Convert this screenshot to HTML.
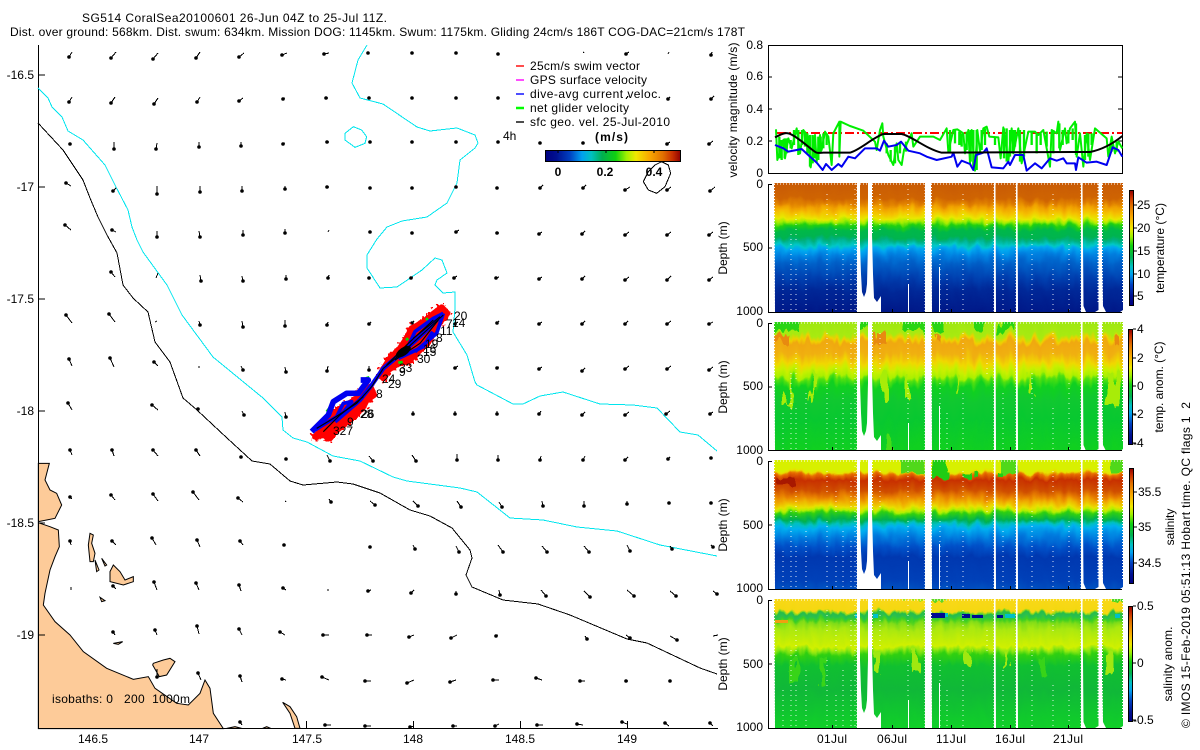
<!DOCTYPE html>
<html><head><meta charset="utf-8"><title>SG514 CoralSea20100601</title>
<style>
html,body{margin:0;padding:0;background:#fff}
svg{display:block}
text{font-family:"Liberation Sans",sans-serif;font-size:12px;fill:#000}
</style></head><body>
<svg xmlns="http://www.w3.org/2000/svg" width="1200" height="750" viewBox="0 0 1200 750">
<defs>
<linearGradient id="g1" gradientUnits="userSpaceOnUse" x1="0" y1="0" x2="0" y2="128">
<stop offset="0" stop-color="#c95c05"/><stop offset=".115" stop-color="#cf6402"/><stop offset=".154" stop-color="#e08000"/><stop offset=".18" stop-color="#f0a000"/><stop offset=".22" stop-color="#f5c000"/><stop offset=".27" stop-color="#e8e800"/><stop offset=".297" stop-color="#a0ee00"/><stop offset=".323" stop-color="#20d010"/><stop offset=".362" stop-color="#00b848"/><stop offset=".414" stop-color="#00b450"/><stop offset=".44" stop-color="#00b080"/><stop offset=".48" stop-color="#00c8c8"/><stop offset=".505" stop-color="#00a8f0"/><stop offset=".557" stop-color="#0080e0"/><stop offset=".622" stop-color="#0060c8"/><stop offset=".727" stop-color="#0040b0"/><stop offset=".83" stop-color="#002898"/><stop offset="1" stop-color="#001888"/>
</linearGradient>
<linearGradient id="g2" gradientUnits="userSpaceOnUse" x1="0" y1="0" x2="0" y2="128">
<stop offset="0" stop-color="#a0e810"/><stop offset=".09" stop-color="#a8ea10"/><stop offset=".13" stop-color="#f0d000"/><stop offset=".16" stop-color="#f0a810"/><stop offset=".24" stop-color="#f0b010"/><stop offset=".315" stop-color="#f0d800"/><stop offset=".37" stop-color="#c8f000"/><stop offset=".42" stop-color="#a8f000"/><stop offset=".447" stop-color="#50e010"/><stop offset=".5" stop-color="#10d020"/><stop offset=".6" stop-color="#10c830"/><stop offset=".75" stop-color="#08c830"/><stop offset="1" stop-color="#10d020"/>
</linearGradient>
<linearGradient id="g3" gradientUnits="userSpaceOnUse" x1="0" y1="0" x2="0" y2="128">
<stop offset="0" stop-color="#d8f000"/><stop offset=".07" stop-color="#d8f000"/><stop offset=".09" stop-color="#e8e000"/><stop offset=".11" stop-color="#e87000"/><stop offset=".15" stop-color="#c83000"/><stop offset=".227" stop-color="#d05000"/><stop offset=".28" stop-color="#e88000"/><stop offset=".32" stop-color="#f0b000"/><stop offset=".36" stop-color="#e8e000"/><stop offset=".385" stop-color="#b0f000"/><stop offset=".41" stop-color="#30d010"/><stop offset=".46" stop-color="#00b050"/><stop offset=".49" stop-color="#00c0c0"/><stop offset=".52" stop-color="#00b0f0"/><stop offset=".59" stop-color="#0080e0"/><stop offset=".67" stop-color="#0050c8"/><stop offset=".75" stop-color="#0038b0"/><stop offset=".93" stop-color="#0040b8"/><stop offset="1" stop-color="#0050c0"/>
</linearGradient>
<linearGradient id="g4" gradientUnits="userSpaceOnUse" x1="0" y1="0" x2="0" y2="128">
<stop offset="0" stop-color="#f8d818"/><stop offset=".085" stop-color="#f4d810"/><stop offset=".1" stop-color="#80d820"/><stop offset=".11" stop-color="#28bc48"/><stop offset=".13" stop-color="#28c050"/><stop offset=".155" stop-color="#40d020"/><stop offset=".18" stop-color="#80dc18"/><stop offset=".23" stop-color="#a8e810"/><stop offset=".36" stop-color="#d0f000"/><stop offset=".39" stop-color="#90e810"/><stop offset=".43" stop-color="#30d010"/><stop offset=".51" stop-color="#10c030"/><stop offset=".7" stop-color="#10b838"/><stop offset="1" stop-color="#10d028"/>
</linearGradient>
<linearGradient id="cb" x1="0" y1="1" x2="0" y2="0">
<stop offset="0" stop-color="#000080"/><stop offset=".08" stop-color="#001090"/><stop offset=".18" stop-color="#0040c0"/><stop offset=".27" stop-color="#00a0f0"/><stop offset=".34" stop-color="#00c0c0"/><stop offset=".42" stop-color="#00b050"/><stop offset=".52" stop-color="#10d010"/><stop offset=".6" stop-color="#a0f000"/><stop offset=".67" stop-color="#f0e800"/><stop offset=".77" stop-color="#f8a800"/><stop offset=".87" stop-color="#e07000"/><stop offset=".94" stop-color="#c83000"/><stop offset="1" stop-color="#900000"/>
</linearGradient>
<linearGradient id="cbh" x1="0" y1="0" x2="1" y2="0">
<stop offset="0" stop-color="#000080"/><stop offset=".08" stop-color="#001090"/><stop offset=".18" stop-color="#0040c0"/><stop offset=".27" stop-color="#00a0f0"/><stop offset=".34" stop-color="#00c0c0"/><stop offset=".42" stop-color="#00b050"/><stop offset=".52" stop-color="#10d010"/><stop offset=".6" stop-color="#a0f000"/><stop offset=".67" stop-color="#f0e800"/><stop offset=".77" stop-color="#f8a800"/><stop offset=".87" stop-color="#e07000"/><stop offset=".94" stop-color="#c83000"/><stop offset="1" stop-color="#900000"/>
</linearGradient>
<filter id="f1" x="-5%" y="-10%" width="110%" height="120%" color-interpolation-filters="sRGB">
<feTurbulence type="fractalNoise" baseFrequency="0.12 0.05" numOctaves="2" seed="3" result="n"/>
<feDisplacementMap in="SourceGraphic" in2="n" scale="10" xChannelSelector="R" yChannelSelector="G"/>
</filter>
<filter id="f2" x="-5%" y="-10%" width="110%" height="120%" color-interpolation-filters="sRGB">
<feTurbulence type="fractalNoise" baseFrequency="0.14 0.03" numOctaves="2" seed="8" result="n"/>
<feDisplacementMap in="SourceGraphic" in2="n" scale="20" xChannelSelector="R" yChannelSelector="G"/>
</filter>
<filter id="f3" x="-5%" y="-10%" width="110%" height="120%" color-interpolation-filters="sRGB">
<feTurbulence type="fractalNoise" baseFrequency="0.16 0.05" numOctaves="2" seed="14" result="n"/>
<feDisplacementMap in="SourceGraphic" in2="n" scale="11" xChannelSelector="R" yChannelSelector="G"/>
</filter>
<filter id="fr" x="-15%" y="-15%" width="130%" height="130%" color-interpolation-filters="sRGB">
<feTurbulence type="fractalNoise" baseFrequency="0.11" numOctaves="2" seed="5" result="n"/>
<feDisplacementMap in="SourceGraphic" in2="n" scale="38" xChannelSelector="R" yChannelSelector="G"/>
</filter>
<clipPath id="segclip"><path d="M774 -1H857V128H775ZM860 -1H868V60L867 100L866 108L864 113L862 108L861 90L860 60ZM872 -1H925V128H881V112L877 118L874 114L873 90L872 50ZM931 -1H994V128H932ZM995.5 -1H1016V128H996ZM1017.5 -1H1081V128H1018ZM1082.5 -1H1098.5V126L1095 128H1086L1083.5 122ZM1102 -1H1123V126L1120 128H1106L1103 122L1102 80Z"/></clipPath>
<path id="dots" fill="none" stroke="#fff" stroke-width="1" stroke-dasharray="1 4" opacity=".85" d="M783 90V128M791 50V128M796 30V60M796 85V128M806 70V128M827 10V35M827 60V128M836 30V55M836 95V128M843 70V128M851 20V50M851 80V128M855 0V128M880 10V50M908 0V40M908 60V100M940 60V128M947 90V128M963 10V40M963 70V128M987 30V55M1003 70V128M1032 50V128M1053 10V35M1053 85V128M1069 60V128"/>
<path id="solid" fill="none" stroke="#fff" stroke-width="1" d="M908.5 100V128M939.5 83V128"/>
<path id="edges" fill="none" stroke="#fff" stroke-width="1" stroke-dasharray="1 2" d="M774.5 0V128M857 0V128M872.5 0V50M925 0V128M931.5 0V128M994 0V128M1016 0V128M1081 0V128M1098 0V120M1102.5 0V120M1122.5 0V120M774 0H857M860 0H868M872 0H925M931 0H994M995 0H1016M1017 0H1081M1082 0H1098M1102 0H1123"/>
</defs>

<rect width="1200" height="750" fill="#fff"/>

<!-- titles -->
<text x="82" y="22" textLength="305" lengthAdjust="spacing">SG514 CoralSea20100601 26-Jun 04Z to 25-Jul 11Z.</text>
<text x="10" y="36" textLength="735" lengthAdjust="spacing">Dist. over ground: 568km. Dist. swum: 634km. Mission DOG: 1145km. Swum: 1175km. Gliding 24cm/s 186T COG-DAC=21cm/s 178T</text>

<!-- land -->
<g transform="translate(0,450) scale(.33333)" fill="#fdcb99" stroke="#000" stroke-width="3">
<path d="M115 40L148 40L135 90L150 120L170 130L185 165L165 205L115 215Z"/>
<path d="M115 218L150 230L175 240L178 290L165 320L150 360L135 430L130 465L165 515L210 555L250 605L320 655L400 688L445 680L465 715L530 760L565 765L600 730L615 690L630 715L640 790L670 836L115 836Z"/>
<path d="M270 250L280 255L275 280L285 310L280 335L270 335L265 285Z"/>
<path d="M305 325L320 345L315 348Z"/>
<path d="M285 330L297 360L290 365Z"/>
<path d="M340 345L360 365L375 390L400 380L400 395L370 405L330 395L330 365Z"/>
<path d="M460 640L490 630L510 625L525 635L500 675L478 680L458 645Z"/>
<path d="M340 580L368 575L355 583Z"/>
<path d="M300 442L315 452L305 455Z"/>
</g>
<g transform="translate(200,450) scale(.33333)" fill="#fdcb99" stroke="#000" stroke-width="3">
<path d="M248 757L270 770L290 800L300 835L285 835L270 790Z"/>
<path d="M80 835L105 830L125 835Z"/>
<path d="M188 835L200 830L212 835Z"/>
</g>

<!-- axes map -->
<path d="M38.5 45V728.5H718M38 75h7M38 187h7M38 299h7M38 411h7M38 523h7M38 635h7M306.5 728v-7M413.5 728v-7M520.5 728v-7M627.5 728v-7" fill="none" stroke="#000"/>
<g text-anchor="end">
<text x="34" y="79">-16.5</text><text x="34" y="191">-17</text><text x="34" y="303">-17.5</text><text x="34" y="415">-18</text><text x="34" y="527">-18.5</text><text x="34" y="639">-19</text>
</g>
<g text-anchor="middle">
<text x="93" y="743">146.5</text><text x="199" y="743">147</text><text x="307" y="743">147.5</text><text x="413" y="743">148</text><text x="520" y="743">148.5</text><text x="627" y="743">149</text>
</g>
<text x="52" y="703" textLength="138" lengthAdjust="spacing" xml:space="preserve">isobaths: 0   200  1000m</text>

<!-- contours -->
<g shape-rendering="crispEdges">
<path fill="none" stroke="#00e5ee" stroke-width="1" d="M38 88L48 98L52 107L62 117L68 131L83 140L105 165L115 185L128 210L132 227L137 240L143 252L167 285L182 315L213 357L263 398L282 417L283 430L293 438L307 442L333 456L360 461L393 477L407 481L460 488L477 492L510 518L543 520L577 527L617 531L660 545L717 556"/>
<path fill="none" stroke="#00e5ee" stroke-width="1" d="M367 45L358 60L352 83L360 98L383 104L417 127L430 131L457 128L475 135L478 143L475 148L460 160L457 183L447 203L427 217L402 221L387 227L377 239L367 255L367 268L380 288L397 287L422 270L435 258L442 260L447 273L437 280L435 285L443 293L455 292L455 308L453 332L467 355L475 382L477 385L513 404L523 404L540 396L563 392L600 404L633 405L657 408L680 432L698 435L717 451"/>
<path transform="scale(.33333)" fill="none" stroke="#00e5ee" stroke-width="3" d="M1060 380L1085 390L1100 410L1095 430L1065 442L1035 420L1035 400Z"/>
<path fill="none" stroke="#000" stroke-width="1" d="M38 123L63 150L83 180L90 198L98 217L107 235L117 253L123 285L133 298L148 312L155 342L170 362L183 398L197 410L227 438L252 461L270 464L290 481L303 485L337 482L353 484L380 493L410 510L430 516L452 528L470 550L472 558L466 575L472 587L503 600L538 604L570 615L627 639L647 643L700 668L717 674"/>
<path transform="translate(360,0) scale(.33333)" fill="none" stroke="#000" stroke-width="3" d="M905 485L925 495L932 520L915 560L890 580L865 570L850 545L865 515L885 495Z"/>

<!-- vectors tails -->
<path fill="none" stroke="#000" stroke-width="1" d="M69 57l3-5M111 58l5-6M153 59l5-6M196 58l4-6M239 57l5-4M282 55l5-2M324 54l5-1M583 53l1-1M626 54l3-2M668 54l1-2M711 55l1-3
M69 102l3-5M111 103l4-6M154 104l4-6M197 102l3-5M239 101l4-3M283 99l2-1M326 98l2 0M626 99l2-3M668 99l2-2M711 99l3-3
M70 144l1-1M114 149l0-7M156 149l1-6M199 147l0-5M241 146l0-4M283 144l2-1M327 142l2 0M667 144l3-2M709 144l4-3
M66 183l5 3M113 191l3-3M157 194l0-8M200 192l0-6M242 191l0-5M285 189l0-3M327 187l2 0M540 188l3-3M583 188l3-3M625 190l5-3M667 190l4-3M710 191l5-4
M65 225l6 5M112 230l4 2M157 237l0-6M200 237l-1-6M243 235l0-5M285 233l0-4M328 232l1-2M456 232l3-2M497 233l2 0M539 234l3-2M582 234l3-3M625 235l4-3M667 235l4-3M709 235l4-3
M111 272l4 5M156 278l2-5M201 281l-1-6M243 281l-1-5M286 279l0-4M328 278l1-3M411 278l2-1M454 278l3-2M496 278l3-1M539 279l3-2M582 279l3-3M625 280l4-3M667 280l4-4M709 280l4-3
M66 315l6 8M109 314l6 8M155 322l2-1M200 325l-1-4M243 327l-1-6M285 326l0-6M327 325l1-3M369 324l2-2M412 323l2-2M455 324l3-2M497 323l2-2M539 324l3-2M582 324l3-3M625 324l3-3M667 324l4-3M709 324l4-2
M69 359l3 7M110 358l4 9M154 362l4 4M199 368l0-2M243 370l-2-4M286 372l-1-5M327 371l1-5M369 370l0-4M455 368l3-2M497 368l2-1M539 369l3-2M582 371l3-3M625 369l4-3M667 369l4-3M709 370l4-3
M68 403l4 7M152 405l6 5M244 415l-2-4M286 417l-1-5M413 414l0-3M455 414l0-3M497 414l0-3M539 414l2-3M582 415l3-3M625 415l4-3M666 414l4-3M710 414l3-2
M70 450l2 5M112 450l2 6M153 450l5 6M196 450l4 6M330 461l-3-6M373 461l-4-5M416 461l-4-6M457 460l0-6M498 460l0-5M540 460l1-4M583 460l2-4M625 460l3-3M668 459l2-2M711 458l1-1
M70 497l2 2M111 495l4 5M153 494l5 7M193 492l6 8M238 498l5 4M285 502l1-1M331 502l-2-3M375 505l-5-4M418 506l-5-5M461 507l-4-6M502 507l-3-5M543 506l-1-5M584 506l0-5M627 504l0-3M669 503l0-1
M70 541l1 4M112 541l4 4M152 538l4 7M197 540l3 7M240 541l3 4M284 545l1 0M415 549l-2-4M459 552l-3-6M503 552l-5-7M547 552l-5-6M589 552l-5-6M630 551l-3-6M672 549l-2-3M713 547l-2-2
M71 587l0 3M113 586l3 3M154 582l3 8M196 583l3 7M239 585l2 6M283 588l3 2M327 590l2 0M368 591l3-1M411 593l3-3M456 594l0-3M500 595l-1-5M546 596l-5-6M590 597l-6-6M634 596l-7-6M676 596l-6-5M717 594l-4-3
M113 632l2 3M155 630l2 5M197 626l2 8M239 629l3 6M280 632l5 3M323 635l6 0M367 635l5 0M409 637l5-2M451 638l6-3M496 636l2-1M587 639l-2-3M630 638l-4-3M677 640l-7-4M713 636l5-1
M157 677l0-8M198 673l3 7M240 676l2 6M282 679l4 1M322 677l7 3M365 681l6 0M407 683l7-3M450 682l6-2M493 680l6 0M536 678l6 2M580 681l5 0M626 681l2 0
M240 722l2 3M325 725l6 0M365 726l6 0M410 727l4-1M453 726l4 0M495 726l4-2M537 725l6 0M577 724l6 1M622 722l5 2M665 723l4 3M710 723l3 3"/>
</g>
<!-- vector heads -->
<path fill="none" stroke="#000" stroke-width="3.6" stroke-linecap="round" d="M69 57h.01M111 58h.01M153 59h.01M196 58h.01M239 57h.01M282 55h.01M324 54h.01M368 53h.01M412 53h.01M456 53h.01M498 54h.01M626 54h.01M711 55h.01M69 102h.01M111 103h.01M154 104h.01M197 102h.01M239 101h.01M283 99h.01M326 98h.01M369 98h.01M412 98h.01M456 98h.01M498 98h.01M668 99h.01M711 99h.01M70 144h.01M114 149h.01M156 149h.01M199 147h.01M241 146h.01M283 144h.01M327 142h.01M370 142h.01M412 142h.01M456 142h.01M498 142h.01M540 143h.01M583 143h.01M667 144h.01M709 144h.01M66 183h.01M113 191h.01M157 194h.01M200 192h.01M242 191h.01M285 189h.01M327 187h.01M370 188h.01M412 188h.01M456 187h.01M497 188h.01M540 188h.01M583 188h.01M625 190h.01M667 190h.01M710 191h.01M65 225h.01M112 230h.01M157 237h.01M200 237h.01M243 235h.01M285 233h.01M370 232h.01M412 233h.01M456 232h.01M497 233h.01M539 234h.01M582 234h.01M625 235h.01M667 235h.01M709 235h.01M111 272h.01M201 281h.01M243 281h.01M286 279h.01M328 278h.01M369 278h.01M411 278h.01M454 278h.01M496 278h.01M539 279h.01M582 279h.01M625 280h.01M667 280h.01M709 280h.01M66 315h.01M109 314h.01M200 325h.01M243 327h.01M285 326h.01M327 325h.01M369 324h.01M412 323h.01M455 324h.01M497 323h.01M539 324h.01M582 324h.01M625 324h.01M667 324h.01M709 324h.01M69 359h.01M110 358h.01M154 362h.01M243 370h.01M286 372h.01M327 371h.01M369 370h.01M455 368h.01M497 368h.01M539 369h.01M582 371h.01M625 369h.01M667 369h.01M709 370h.01M68 403h.01M152 405h.01M198 409h.01M244 415h.01M286 417h.01M413 414h.01M455 414h.01M497 414h.01M539 414h.01M582 415h.01M625 415h.01M666 414h.01M710 414h.01M70 450h.01M112 450h.01M153 450h.01M196 450h.01M241 457h.01M286 459h.01M330 461h.01M373 461h.01M416 461h.01M457 460h.01M498 460h.01M540 460h.01M583 460h.01M625 460h.01M668 459h.01M711 458h.01M70 497h.01M111 495h.01M153 494h.01M193 492h.01M238 498h.01M331 502h.01M375 505h.01M418 506h.01M461 507h.01M502 507h.01M543 506h.01M584 506h.01M627 504h.01M669 503h.01M711 503h.01M70 541h.01M112 541h.01M152 538h.01M197 540h.01M240 541h.01M284 545h.01M370 547h.01M415 549h.01M459 552h.01M503 552h.01M547 552h.01M589 552h.01M630 551h.01M672 549h.01M713 547h.01M113 586h.01M154 582h.01M196 583h.01M239 585h.01M283 588h.01M368 591h.01M411 593h.01M456 594h.01M500 595h.01M546 596h.01M590 597h.01M634 596h.01M676 596h.01M717 594h.01M113 632h.01M155 630h.01M197 626h.01M239 629h.01M280 632h.01M323 635h.01M367 635h.01M409 637h.01M451 638h.01M496 636h.01M587 639h.01M630 638h.01M677 640h.01M157 677h.01M198 673h.01M240 676h.01M282 679h.01M322 677h.01M365 681h.01M407 683h.01M450 682h.01M493 680h.01M536 678h.01M580 681h.01M626 681h.01M670 681h.01M240 722h.01M325 725h.01M365 726h.01M410 727h.01M453 726h.01M495 726h.01M537 725h.01M577 724h.01M622 722h.01M665 723h.01M710 723h.01"/>

<!-- glider track -->
<g transform="translate(300,300) scale(.33333)">
<g fill="#ff0000" stroke="#ff0000" stroke-width="18" stroke-linejoin="round">
<path d="M45 410L70 385L95 345L130 320L165 300L195 262L212 262L222 285L200 300L190 320L165 345L130 375L105 395L90 415L70 405Z"/>
<path d="M245 215L270 175L300 145L320 115L335 85L365 70L395 45L425 22L442 40L425 60L405 90L385 125L360 150L325 185L295 190L265 210L250 235Z"/>
</g>
<g filter="url(#fr)" fill="#ff0000" stroke="#ff0000" stroke-width="18" stroke-linejoin="round">
<path d="M45 410L70 385L95 345L130 320L165 300L195 262L212 262L222 285L200 300L190 320L165 345L130 375L105 395L90 415L70 405Z"/>
<path d="M245 215L270 175L300 145L320 115L335 85L365 70L395 45L425 22L442 40L425 60L405 90L385 125L360 150L325 185L295 190L265 210L250 235Z"/>
</g>
<path fill="none" stroke="#00e000" stroke-width="8" d="M80 335L90 322M198 235L208 232M295 188L308 186M318 120L325 115M378 60L384 55"/>
<g fill="none" stroke="#0000f0" stroke-width="11" stroke-linejoin="round">
<path stroke-width="17" d="M35 395L85 345L100 305L140 280L175 280L205 240L182 240"/>
<path d="M45 390L110 350L130 310L155 305L120 350"/>
<path stroke-width="13" d="M105 365L180 300L215 255L250 205L310 155L370 100L430 40"/>
<path d="M322 145L345 95L400 55L430 40"/>
<path d="M345 155L410 100L430 40"/>
<path d="M295 175L370 140L398 95"/>
</g>
<g fill="none" stroke="#000" stroke-width="3.5">
<path d="M50 385L100 355L170 310L215 260L250 205L310 155L430 45"/>
<path d="M70 395L120 345L190 290"/>
<path d="M260 195L325 130L400 60"/>
<path d="M285 180L360 130L415 60"/>
<path d="M340 115L420 50"/>
</g>
<ellipse cx="310" cy="155" rx="26" ry="12" transform="rotate(-35 310 155)" fill="#000"/>
</g>
<g>
<text x="454" y="320">20</text><text x="452" y="327">14</text><text x="446" y="328">7</text><text x="440" y="335">11</text><text x="436" y="342">8</text><text x="425" y="348">19</text><text x="423" y="353">16</text><text x="423" y="356">15</text><text x="417" y="363">30</text><text x="399" y="372">33</text><text x="399" y="376">9</text><text x="382" y="383">24</text><text x="388" y="388">29</text><text x="376" y="398">8</text><text x="360" y="418">28</text><text x="361" y="418">26</text><text x="347" y="426">9</text><text x="333" y="435">327</text>
</g>

<!-- legend -->
<g fill="none" stroke-width="1.4">
<path stroke="#ff0000" d="M516 66h8"/><path stroke="#ff00ff" d="M516 80h8"/><path stroke="#0000ff" d="M516 94h8"/><path stroke="#00ff00" stroke-width="2.5" d="M516 108h8"/><path stroke="#000" d="M516 122h8"/>
</g>
<text x="530" y="70" textLength="110" lengthAdjust="spacing">25cm/s swim vector</text>
<text x="530" y="84" textLength="117" lengthAdjust="spacing">GPS surface velocity</text>
<text x="530" y="98" textLength="131" lengthAdjust="spacing">dive-avg current veloc.</text>
<text x="530" y="112" textLength="99" lengthAdjust="spacing">net glider velocity</text>
<text x="530" y="126" textLength="140" lengthAdjust="spacing">sfc geo. vel. 25-Jul-2010</text>
<text x="503" y="140">4h</text>
<text x="595" y="141" style="font-weight:bold" textLength="33">(m/s)</text>
<rect x="545.5" y="150.5" width="135" height="11" fill="url(#cbh)" stroke="#000"/>
<path d="M558 150v3M606 150v3M654 150v3" stroke="#000"/>
<g text-anchor="middle" style="font-weight:bold">
<text x="558" y="176">0</text><text x="605" y="176">0.2</text><text x="654" y="176">0.4</text>
</g>

<!-- velocity plot -->
<rect x="768.5" y="45.5" width="354" height="128" fill="#fff" stroke="#000"/>
<path d="M768 77h4M768 109h4M768 141h4M1122 77h-4M1122 109h-4M1122 141h-4" stroke="#000"/>
<path d="M777 133H1122" fill="none" stroke="#ff0000" stroke-width="2" stroke-dasharray="9 3 2 3"/>
<g transform="translate(720,30) scale(.33333)" fill="none" stroke-linejoin="round">
<path stroke="#00ee00" stroke-width="6" d="M168 298L172 390L190 330L195 385L205 325L215 355L230 295L240 370L250 300L265 320L272 412L285 315L290 395L300 315L305 360L315 305L325 320L335 405L340 310L358 275L358 380L362 275L390 288L430 302L465 335L470 360L480 300L487 280L490 320L505 375L520 405L530 340L535 390L545 405L552 360L575 310L580 350L600 320L640 320L660 330L680 295L685 365L700 300L712 298L730 310L735 370L745 300L750 400L755 300L765 422L772 300L780 365L790 295L800 290L808 320L835 322L842 385L850 292L865 395L875 295L880 370L895 295L905 400L925 305L945 305L955 315L970 300L990 410L995 300L1010 310L1015 275L1020 360L1035 295L1040 340L1050 295L1065 275L1070 380L1080 310L1090 410L1100 310L1110 390L1125 295L1160 325L1165 380L1175 320L1185 370L1195 335L1207 355"/>
<path stroke="#00ee00" stroke-width="7" d="M178 385V320M185 390V330M194 385V325M200 370V325M212 355V330M222 345V300M235 300V375M246 300V345M255 305V350M262 310V370M270 315V410M278 315V400M285 320V385M295 320V390M302 320V370M310 310V355M320 310V345M500 370V340M512 395V360M525 400V350M540 370V340M558 365V335M690 300V365M705 300V340M718 305V345M725 310V350M740 305V360M752 300V395M760 300V410M770 300V420M785 300V360M795 295V345M825 320V345M852 295V385M860 295V395M870 300V380M878 300V370M885 300V350M900 300V395M912 300V380M935 305V345M950 310V370M962 310V345M980 305V350M1000 300V370M1018 280V355M1028 300V345M1045 300V340M1058 295V330M1068 280V375M1095 315V390M1105 310V380M1115 310V345M1175 330V365M1190 335V365"/>
<path stroke="#0000f0" stroke-width="6" d="M165 345L190 355L205 365L245 357L270 380L290 398L308 420L318 402L335 420L355 402L365 410L385 380L405 385L435 355L470 355L480 362L492 332L505 350L530 345L543 335L565 362L600 370L620 380L650 390L695 380L700 368L712 410L725 392L750 402L760 420L768 375L790 368L800 355L815 412L850 415L865 395L870 405L885 375L910 375L920 422L945 400L965 415L990 385L1010 392L1030 385L1040 400L1065 400L1068 420L1075 382L1100 398L1130 395L1160 405L1178 352L1195 360L1207 380"/>
<path stroke="#000" stroke-width="6" d="M165 322C185 312 195 308 205 310S235 325 265 350S290 368 310 368L390 368C420 360 455 325 490 312L545 312C575 318 620 358 665 368L1060 366L1110 366C1150 358 1180 340 1207 318"/>
</g>
<g text-anchor="end">
<text x="763" y="49">0.8</text><text x="763" y="80">0.6</text><text x="763" y="113">0.4</text><text x="763" y="145">0.2</text><text x="763" y="177">0</text>
</g>
<text transform="translate(737,110) rotate(-90)" text-anchor="middle" textLength="135" lengthAdjust="spacing">velocity magnitude (m/s)</text>

<!-- panel 1 -->
<g transform="translate(0,184)">
<g clip-path="url(#segclip)">
<g filter="url(#f1)"><rect x="760" y="-15" width="375" height="158" fill="url(#g1)"/></g>
</g>
<use href="#dots"/><use href="#solid"/><use href="#edges"/>
</g>
<!-- panel 2 -->
<g transform="translate(0,323)">
<g clip-path="url(#segclip)">
<g filter="url(#f2)"><rect x="760" y="-15" width="375" height="158" fill="url(#g2)"/>
<g fill="#28d414"><rect x="776" y="-12" width="24" height="20"/><rect x="902" y="-12" width="24" height="20"/><rect x="931" y="-12" width="14" height="22"/><rect x="975" y="-12" width="10" height="18"/><rect x="1000" y="-12" width="15" height="20"/><rect x="862" y="-12" width="6" height="20"/></g>
<g fill="#e88a10"><rect x="776" y="12" width="10" height="8"/><rect x="876" y="11" width="9" height="10"/><rect x="931" y="12" width="9" height="8"/><rect x="1112" y="15" width="8" height="10"/></g>
<g fill="#a8ec08"><rect x="787" y="50" width="4" height="34"/><rect x="812" y="50" width="3" height="26"/><rect x="884" y="50" width="5" height="28"/><rect x="905" y="50" width="4" height="24"/><rect x="958" y="50" width="3" height="20"/><rect x="1030" y="50" width="3" height="20"/><rect x="1108" y="50" width="10" height="32"/></g>
<rect x="886" y="112" width="10" height="14" fill="#48dc18"/>
</g>
</g>
<use href="#dots"/><use href="#solid"/><use href="#edges"/>
</g>
<!-- panel 3 -->
<g transform="translate(0,461)">
<g clip-path="url(#segclip)">
<g filter="url(#f1)"><rect x="760" y="-15" width="375" height="158" fill="url(#g3)"/>
<g fill="#50d81a"><rect x="900" y="-12" width="25" height="24"/><rect x="1001" y="-12" width="15" height="26"/><rect x="1112" y="-12" width="11" height="24"/></g>
<g fill="#20cc14"><rect x="933" y="-12" width="12" height="30"/><rect x="942" y="10" width="6" height="8"/><rect x="962" y="12" width="8" height="5"/><rect x="974" y="12" width="7" height="5"/><rect x="997" y="11" width="6" height="5"/></g>
<rect x="776" y="18" width="20" height="6" fill="#a81800"/>
</g>
</g>
<use href="#dots"/><use href="#solid"/><use href="#edges"/>
</g>
<!-- panel 4 -->
<g transform="translate(0,600)">
<g clip-path="url(#segclip)">
<g filter="url(#f3)"><rect x="760" y="-15" width="375" height="158" fill="url(#g4)"/>
<rect x="1112" y="-12" width="11" height="14" fill="#50d820"/>
<rect x="905" y="-12" width="20" height="12" fill="#a8e610"/>
<rect x="931" y="-12" width="14" height="14" fill="#60d820"/>
<g fill="#a0e810"><rect x="875" y="50" width="5" height="24"/><rect x="912" y="50" width="6" height="22"/><rect x="965" y="50" width="5" height="16"/><rect x="1005" y="50" width="4" height="18"/><rect x="1106" y="50" width="8" height="24"/></g>
<g fill="#38d418"><rect x="790" y="58" width="8" height="24"/><rect x="820" y="58" width="6" height="30"/><rect x="1040" y="58" width="6" height="18"/></g>
</g>
<g fill="#00c0c8"><rect x="943" y="13" width="5" height="4"/><rect x="1005" y="14" width="10" height="4"/><rect x="855" y="14" width="3" height="4"/><rect x="873" y="14" width="5" height="4"/><rect x="1115" y="14" width="5" height="4"/></g>
<g fill="#000a90"><rect x="931" y="13" width="14" height="5"/><rect x="962" y="14" width="8" height="4"/><rect x="972" y="15" width="11" height="3"/><rect x="997" y="15" width="6" height="3"/></g>
<rect x="775" y="20" width="13" height="3" fill="#f0a010"/>
</g>
<use href="#dots"/><use href="#solid"/><use href="#edges"/>
</g>

<!-- panel axes -->
<path fill="none" stroke="#000" d="M772 184.5H768.5V312.5H1122M768 248h4M772 323.5H768.5V450.5H1122M768 387h4M772 461.5H768.5V589.5H1122M768 525h4M772 600.5H768.5V728.5H1122M768 664h4M832.5 728v-3M892.5 728v-3M951.5 728v-3M1010.5 728v-3M1068.5 728v-3M832.5 589v-3M892.5 589v-3M951.5 589v-3M1010.5 589v-3M1068.5 589v-3M832.5 450v-3M892.5 450v-3M951.5 450v-3M1010.5 450v-3M1068.5 450v-3M832.5 312v-3M892.5 312v-3M951.5 312v-3M1010.5 312v-3M1068.5 312v-3"/>
<g text-anchor="end">
<text x="763" y="188">0</text><text x="763" y="251">500</text><text x="763" y="315">1000</text>
<text x="763" y="327">0</text><text x="763" y="390">500</text><text x="763" y="454">1000</text>
<text x="763" y="465">0</text><text x="763" y="529">500</text><text x="763" y="592">1000</text>
<text x="763" y="604">0</text><text x="763" y="668">500</text><text x="763" y="731">1000</text>
</g>
<g text-anchor="middle">
<text transform="translate(727,248) rotate(-90)">Depth (m)</text>
<text transform="translate(727,387) rotate(-90)">Depth (m)</text>
<text transform="translate(727,525) rotate(-90)">Depth (m)</text>
<text transform="translate(727,664) rotate(-90)">Depth (m)</text>
</g>
<g text-anchor="middle">
<text x="832" y="743" textLength="30">01Jul</text><text x="892" y="743" textLength="30">06Jul</text><text x="951" y="743" textLength="30">11Jul</text><text x="1010" y="743" textLength="30">16Jul</text><text x="1068" y="743" textLength="30">21Jul</text>
</g>

<!-- colorbars -->
<g stroke="#000">
<rect x="1129.5" y="190.5" width="4" height="115" fill="url(#cb)"/>
<rect x="1128.5" y="329.5" width="4" height="115" fill="url(#cb)"/>
<rect x="1129.5" y="468.5" width="4" height="115" fill="url(#cb)"/>
<rect x="1128.5" y="606.5" width="4" height="115" fill="url(#cb)"/>
<path fill="none" d="M1134 205h3M1134 228h3M1134 251h3M1134 274h3M1134 296h3M1133 329h3M1133 358h3M1133 386h3M1133 414h3M1133 443h3M1134 492h3M1134 527h3M1134 563h3M1133 606h3M1133 663h3M1133 720h3"/>
</g>
<g>
<text x="1137" y="209">25</text><text x="1137" y="232">20</text><text x="1137" y="255">15</text><text x="1137" y="278">10</text><text x="1137" y="300">5</text>
<text x="1137" y="333">4</text><text x="1137" y="362">2</text><text x="1137" y="390">0</text><text x="1133" y="418">-2</text><text x="1133" y="447">-4</text>
<text x="1138" y="496">35.5</text><text x="1138" y="531">35</text><text x="1138" y="567">34.5</text>
<text x="1137" y="610">0.5</text><text x="1137" y="667">0</text><text x="1133" y="724">-0.5</text>
</g>
<g text-anchor="middle">
<text transform="translate(1164,248) rotate(-90)" textLength="90" lengthAdjust="spacing">temperature (°C)</text>
<text transform="translate(1163,387) rotate(-90)" textLength="91" lengthAdjust="spacing">temp. anom. (°C)</text>
<text transform="translate(1174,527) rotate(-90)">salinity</text>
<text transform="translate(1172,664) rotate(-90)" textLength="75" lengthAdjust="spacing">salinity anom.</text>
</g>
<text transform="translate(1190,728) rotate(-90)" textLength="326" lengthAdjust="spacing" xml:space="preserve">© IMOS 15-Feb-2019 05:51:13 Hobart time. QC flags 1  2</text>
</svg>
</body></html>
